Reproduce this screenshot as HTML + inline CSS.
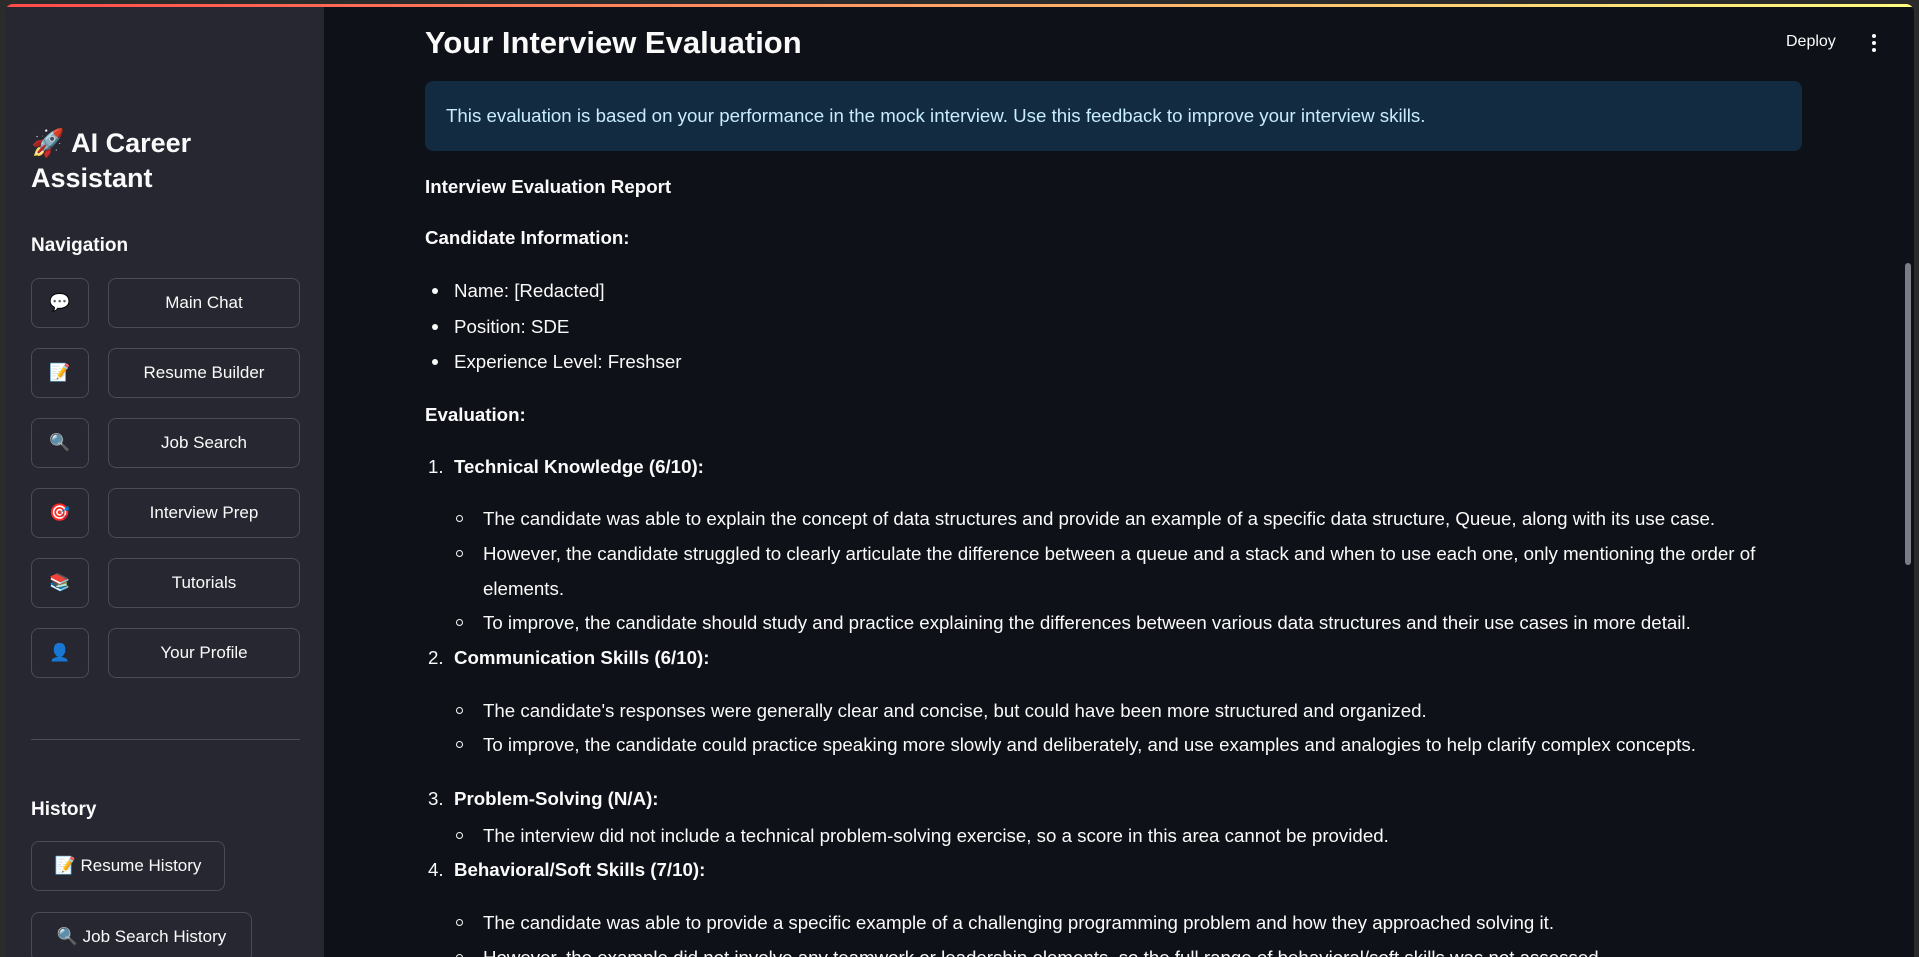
<!DOCTYPE html>
<html><head><meta charset="utf-8"><style>
*{margin:0;padding:0;box-sizing:border-box}
body{width:1919px;height:957px;overflow:hidden;background:#2b2b2b;font-family:"Liberation Sans","Noto Sans CJK SC",sans-serif;color:#fafafa;position:relative}
#frame{position:absolute;left:5px;top:4px;right:5px;bottom:0;background:#0e1117;overflow:hidden;border-radius:8px 8px 0 0}
#bar{position:absolute;left:0;right:0;top:0;height:3px;background:linear-gradient(90deg,#ff4b4b,#fffd80)}
#side{position:absolute;left:0;top:3px;width:319px;bottom:0;background:#262730}
.a{position:absolute;white-space:nowrap}
.btn{position:absolute;border:1px solid #4a4c55;border-radius:8px;background:#262730;display:flex;align-items:center;justify-content:center;font-size:17px;color:#fafafa}
.t{position:absolute;white-space:nowrap;font-size:18.7px;line-height:22px}
.b{font-weight:bold}
.dot{position:absolute;width:6px;height:6px;border-radius:50%;background:#fafafa}
.circ{position:absolute;width:7px;height:7px;border-radius:50%;border:1.3px solid #fafafa}
</style></head><body>
<div id="frame">
<div id="bar"></div>
<div id="side">
 <div class="a b" style="left:26px;top:119px;font-size:27px;line-height:35px">🚀 AI Career<br>Assistant</div>
 <div class="a b" style="left:26px;top:228px;font-size:19px">Navigation</div>
 <div class="btn" style="left:26px;top:271px;width:58px;height:50px">💬</div>
 <div class="btn" style="left:103px;top:271px;width:192px;height:50px">Main Chat</div>
 <div class="btn" style="left:26px;top:341px;width:58px;height:50px">📝</div>
 <div class="btn" style="left:103px;top:341px;width:192px;height:50px">Resume Builder</div>
 <div class="btn" style="left:26px;top:411px;width:58px;height:50px">🔍</div>
 <div class="btn" style="left:103px;top:411px;width:192px;height:50px">Job Search</div>
 <div class="btn" style="left:26px;top:481px;width:58px;height:50px">🎯</div>
 <div class="btn" style="left:103px;top:481px;width:192px;height:50px">Interview Prep</div>
 <div class="btn" style="left:26px;top:551px;width:58px;height:50px">📚</div>
 <div class="btn" style="left:103px;top:551px;width:192px;height:50px">Tutorials</div>
 <div class="btn" style="left:26px;top:621px;width:58px;height:50px">👤</div>
 <div class="btn" style="left:103px;top:621px;width:192px;height:50px">Your Profile</div>
 <div class="a" style="left:26px;top:732px;width:269px;height:1px;background:#4a4c55"></div>
 <div class="a b" style="left:26px;top:792px;font-size:19px">History</div>
 <div class="btn" style="left:26px;top:834px;width:194px;height:50px">📝&nbsp;Resume History</div>
 <div class="btn" style="left:26px;top:905px;width:221px;height:50px">🔍&nbsp;Job Search History</div>
</div>
<div class="a b" style="left:420px;top:21px;font-size:31px">Your Interview Evaluation</div>
<div class="a" style="left:1781px;top:29px;font-size:16px">Deploy</div>
<div class="a" style="left:1867px;top:30px;width:4px;height:18px">
 <div class="dot" style="width:4px;height:4px;left:0;top:0"></div><div class="dot" style="width:4px;height:4px;left:0;top:7px"></div><div class="dot" style="width:4px;height:4px;left:0;top:14px"></div></div>
<div class="a" style="left:420px;top:77px;width:1377px;height:70px;background:#132b40;border-radius:8px"></div>
<div class="t" style="left:441px;top:101px;color:#c7ebff">This evaluation is based on your performance in the mock interview. Use this feedback to improve your interview skills.</div>
<div class="a" style="left:1900px;top:259px;width:6px;height:302px;background:#7b7d85;border-radius:3px"></div>

<div class="t b" style="left:420px;top:172px">Interview Evaluation Report</div>
<div class="t b" style="left:420px;top:223px">Candidate Information:</div>
<div class="dot" style="left:427px;top:284px"></div><div class="t" style="left:449px;top:276px">Name: [Redacted]</div>
<div class="dot" style="left:427px;top:320px"></div><div class="t" style="left:449px;top:312px">Position: SDE</div>
<div class="dot" style="left:427px;top:355px"></div><div class="t" style="left:449px;top:347px">Experience Level: Freshser</div>
<div class="t b" style="left:420px;top:400px">Evaluation:</div>
<div class="t" style="left:423px;top:452px">1.</div><div class="t b" style="left:449px;top:452px">Technical Knowledge (6/10):</div>
<div class="circ" style="left:451px;top:511px"></div><div class="t" style="left:478px;top:504px">The candidate was able to explain the concept of data structures and provide an example of a specific data structure, Queue, along with its use case.</div>
<div class="circ" style="left:451px;top:546px"></div><div class="t" style="left:478px;top:539px">However, the candidate struggled to clearly articulate the difference between a queue and a stack and when to use each one, only mentioning the order of</div>
<div class="t" style="left:478px;top:574px">elements.</div>
<div class="circ" style="left:451px;top:615px"></div><div class="t" style="left:478px;top:608px">To improve, the candidate should study and practice explaining the differences between various data structures and their use cases in more detail.</div>
<div class="t" style="left:423px;top:643px">2.</div><div class="t b" style="left:449px;top:643px">Communication Skills (6/10):</div>
<div class="circ" style="left:451px;top:703px"></div><div class="t" style="left:478px;top:696px">The candidate's responses were generally clear and concise, but could have been more structured and organized.</div>
<div class="circ" style="left:451px;top:737px"></div><div class="t" style="left:478px;top:730px">To improve, the candidate could practice speaking more slowly and deliberately, and use examples and analogies to help clarify complex concepts.</div>
<div class="t" style="left:423px;top:784px">3.</div><div class="t b" style="left:449px;top:784px">Problem-Solving (N/A):</div>
<div class="circ" style="left:451px;top:828px"></div><div class="t" style="left:478px;top:821px">The interview did not include a technical problem-solving exercise, so a score in this area cannot be provided.</div>
<div class="t" style="left:423px;top:855px">4.</div><div class="t b" style="left:449px;top:855px">Behavioral/Soft Skills (7/10):</div>
<div class="circ" style="left:451px;top:915px"></div><div class="t" style="left:478px;top:908px">The candidate was able to provide a specific example of a challenging programming problem and how they approached solving it.</div>
<div class="circ" style="left:451px;top:950px"></div><div class="t" style="left:478px;top:943px">However, the example did not involve any teamwork or leadership elements, so the full range of behavioral/soft skills was not assessed.</div>
</div>
</body></html>
